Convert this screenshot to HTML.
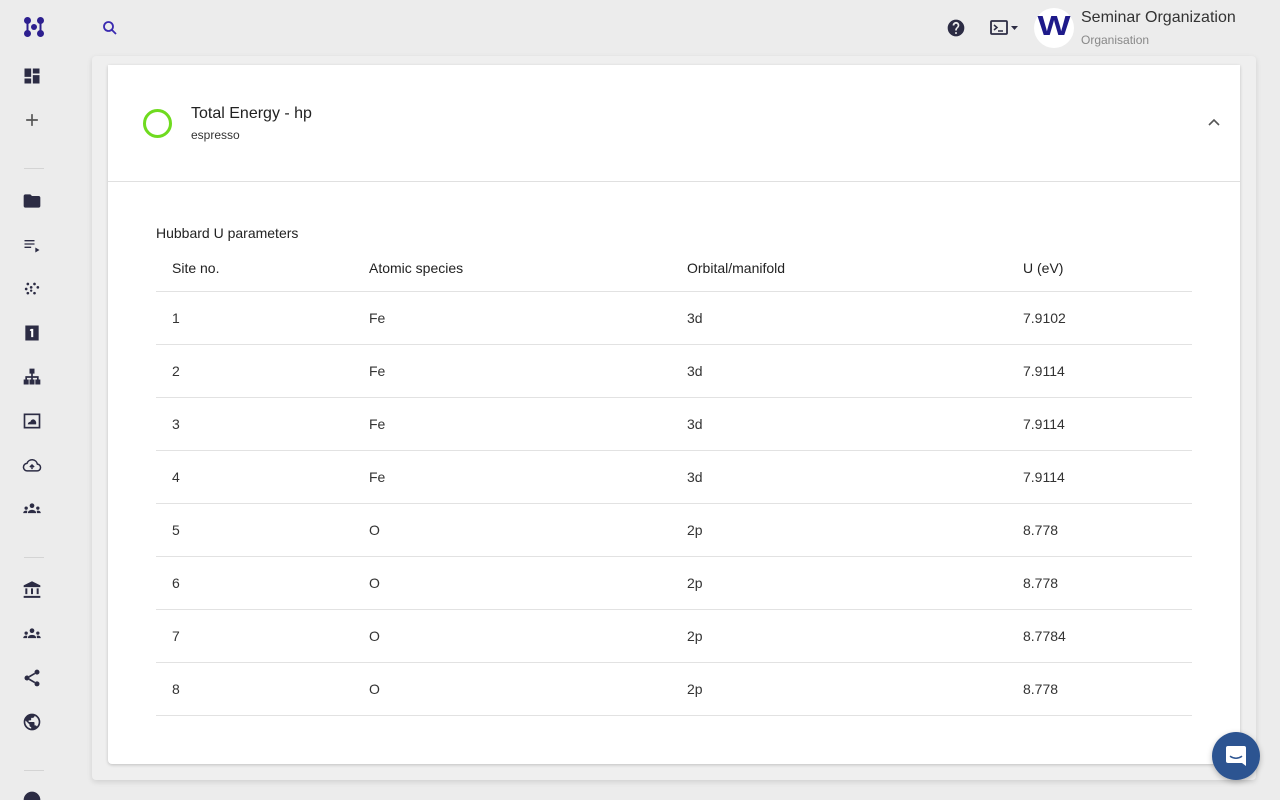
<!DOCTYPE html>
<html style="overflow:hidden;width:1280px;height:800px"><head><meta charset="utf-8"><style>
*{margin:0;padding:0;box-sizing:border-box}
body{width:1280px;height:800px;overflow:hidden;background:#ececec;font-family:"Liberation Sans",sans-serif;color:#222;position:relative}
.abs{position:absolute}
.panel{left:92px;top:56px;width:1164px;height:724px;background:#efefef;box-shadow:0 2px 6px rgba(0,0,0,.12);border-radius:4px}
.card{left:108px;top:65px;width:1132px;height:699px;background:#fff;box-shadow:0 1px 3px rgba(0,0,0,.2);border-radius:0 0 4px 4px}
.ic{position:absolute;left:22px;width:20px;height:20px}
.sep{position:absolute;left:24px;width:20px;height:1px;background:#d4d4d4}
.cell{position:absolute;font-size:14px;color:#333}
.hline{position:absolute;left:156px;width:1036px;height:1px;background:#e2e2e2}
</style></head><body>
<svg class="abs" style="left:23px;top:16px" width="22" height="22" viewBox="0 0 22 22" fill="#2d1f8f">
<circle cx="4.5" cy="4.5" r="3.5"/><circle cx="17.5" cy="4.5" r="3.5"/><circle cx="11" cy="11" r="3"/><circle cx="4.5" cy="17.5" r="3.5"/><circle cx="17.5" cy="17.5" r="3.5"/><rect x="3.5" y="5" width="2" height="10"/><rect x="16.5" y="5" width="2" height="10"/></svg>
<svg class="abs" style="left:101px;top:19px" width="18" height="18" viewBox="0 0 24 24" fill="none" stroke="#3a2ab0" stroke-width="2.4"><circle cx="10" cy="10" r="6"/><path d="M14.5 14.5L20 20"/></svg>
<svg class="ic" style="top:66px" viewBox="0 0 24 24" fill="#2c2c44"><path d="M3 13h8V3H3zm0 8h8v-6H3zm10 0h8V11h-8zm0-18v6h8V3z"/></svg>
<svg class="ic" style="top:110px" viewBox="0 0 24 24" fill="#555"><path d="M19 13h-6v6h-2v-6H5v-2h6V5h2v6h6z"/></svg>
<div class="sep" style="top:168px"></div>
<svg class="ic" style="top:191px" viewBox="0 0 24 24" fill="#2c2c44"><path d="M10 4H4c-1.1 0-2 .9-2 2v12c0 1.1.9 2 2 2h16c1.1 0 2-.9 2-2V8c0-1.1-.9-2-2-2h-8z"/></svg>
<svg class="ic" style="top:235px" viewBox="0 0 24 24" fill="#2c2c44"><path d="M3 6h12v1.6H3zm0 4h12v1.6H3zm0 4h8v1.6H3zm13 1v6l5-3z"/></svg>
<svg class="ic" style="top:279px" viewBox="0 0 24 24" fill="#2c2c44"><circle cx="7" cy="6" r="1.6"/><circle cx="15" cy="6" r="1.6"/><circle cx="11" cy="10" r="1.6"/><circle cx="19" cy="10" r="1.6"/><circle cx="5" cy="12" r="1.6"/><circle cx="7" cy="17" r="1.6"/><circle cx="15" cy="17" r="1.6"/><circle cx="11" cy="14" r="1.4"/></svg>
<svg class="ic" style="top:323px" viewBox="0 0 24 24" fill="#2c2c44"><path d="M4 3h16v18H4z"/><path d="M11 7h2.5v10H11V9.5H9.5V8z" fill="#fff"/></svg>
<svg class="ic" style="top:367px" viewBox="0 0 24 24" fill="#2c2c44"><path d="M9 2h6v6h-2v3h7v4h2v6h-6v-6h2v-2h-5v2h2v6H9v-6h2v-2H6v2h2v6H2v-6h2v-4h7V8H9z"/></svg>
<svg class="ic" style="top:411px" viewBox="0 0 24 24" fill="none" stroke="#2c2c44" stroke-width="2"><rect x="3" y="4" width="18" height="16"/><path d="M7 16c0-2 1.5-3 3-3 .5-2 2-3 3.5-3s3 1.5 3.5 3.5V16z" fill="#2c2c44" stroke="none"/></svg>
<svg class="ic" style="top:455px" viewBox="0 0 24 24" fill="none" stroke="#2c2c44" stroke-width="1.8"><path d="M6.5 19a4.5 4.5 0 0 1-.5-9A6.5 6.5 0 0 1 18.5 11 4 4 0 0 1 18 19z"/><path d="M12 17v-5m-2.5 2.5L12 12l2.5 2.5" /></svg>
<svg class="ic" style="top:499px" viewBox="0 0 24 24" fill="#2c2c44"><circle cx="12" cy="8" r="2.8"/><path d="M7 17c0-2.5 2.2-4 5-4s5 1.5 5 4z"/><circle cx="5" cy="11" r="2"/><circle cx="19" cy="11" r="2"/><path d="M1.5 17c0-2 1.5-3 3.5-3 .7 0 1 .1 1.3.3L6 17zm21 0c0-2-1.5-3-3.5-3-.7 0-1 .1-1.3.3L18 17z"/></svg>
<div class="sep" style="top:557px"></div>
<svg class="ic" style="top:580px" viewBox="0 0 24 24" fill="#2c2c44"><path d="M12 1.5L2 6.5V8.5h20V6.5zM4 10h2.4v7H4zm6.8 0h2.4v7h-2.4zm6.8 0H20v7h-2.4zM2 19h20v2.5H2z"/></svg>
<svg class="ic" style="top:624px" viewBox="0 0 24 24" fill="#2c2c44"><circle cx="12" cy="8" r="2.8"/><path d="M7 17c0-2.5 2.2-4 5-4s5 1.5 5 4z"/><circle cx="5" cy="11" r="2"/><circle cx="19" cy="11" r="2"/><path d="M1.5 17c0-2 1.5-3 3.5-3 .7 0 1 .1 1.3.3L6 17zm21 0c0-2-1.5-3-3.5-3-.7 0-1 .1-1.3.3L18 17z"/></svg>
<svg class="ic" style="top:668px" viewBox="0 0 24 24" fill="#2c2c44"><circle cx="18" cy="5" r="3"/><circle cx="6" cy="12" r="3"/><circle cx="18" cy="19" r="3"/><path d="M8.6 13.5l6.8 4M15.4 6.5l-6.8 4" stroke="#2c2c44" stroke-width="2"/></svg>
<svg class="ic" style="top:712px" viewBox="0 0 24 24" fill="#2c2c44"><path d="M12 2a10 10 0 1 0 0 20 10 10 0 0 0 0-20zm-1 17.9A8 8 0 0 1 4.2 10.2L9 15v1c0 1.1.9 2 2 2zm6.9-2.5c-.3-.8-1-1.4-1.9-1.4h-1v-3c0-.6-.4-1-1-1H8v-2h2c.6 0 1-.4 1-1V7h2c1.1 0 2-.9 2-2v-.4a8 8 0 0 1 2.9 12.8z"/></svg>
<div class="sep" style="top:770px"></div>
<svg class="ic" style="top:790px" viewBox="0 0 24 24" fill="#2c2c44"><path d="M12 2a10 10 0 1 0 0 20 10 10 0 0 0 0-20z"/></svg>
<svg class="abs" style="left:946px;top:18px" width="20" height="20" viewBox="0 0 24 24" fill="#2c2c44"><path d="M12 2a10 10 0 1 0 0 20 10 10 0 0 0 0-20zm1 17h-2v-2h2zm2.1-7.8l-.9.9C13.5 12.9 13 13.5 13 15h-2v-.5c0-1.1.5-2.1 1.2-2.8l1.2-1.3A2 2 0 1 0 10 9H8a4 4 0 1 1 7.1 2.2z"/></svg>
<svg class="abs" style="left:990px;top:19px" width="30" height="18" viewBox="0 0 30 18"><rect x="1" y="2" width="16" height="13" rx="1" fill="none" stroke="#2c2c44" stroke-width="1.8"/><path d="M4 6l3 2.5L4 11" fill="none" stroke="#2c2c44" stroke-width="1.5"/><path d="M8 12h5" stroke="#2c2c44" stroke-width="1.5"/><path d="M21 7h7l-3.5 4z" fill="#2c2c44"/></svg>
<div class="abs" style="left:1034px;top:8px;width:40px;height:40px;border-radius:50%;background:#fff"></div>
<div class="abs" style="left:1034px;top:10px;width:40px;text-align:center;font-weight:bold;font-size:28px;color:#1e1a8a;transform:scaleX(1.25)">W</div>
<div class="abs" style="left:1081px;top:9px;font-size:16px;color:#333">Seminar Organization</div>
<div class="abs" style="left:1081px;top:33px;font-size:12px;color:#888">Organisation</div>
<div class="abs panel"></div>
<div class="abs card"></div>
<div class="abs" style="left:143px;top:109px;width:29px;height:29px;border-radius:50%;border:3px solid #6fdb1f"></div>
<div class="abs" style="left:191px;top:105px;font-size:16px;color:#222">Total Energy - hp</div>
<div class="abs" style="left:191px;top:128px;font-size:12px;color:#333">espresso</div>
<svg class="abs" style="left:1207px;top:117px" width="14" height="10" viewBox="0 0 14 10"><path d="M2 8l5-5 5 5" fill="none" stroke="#555" stroke-width="1.6"/></svg>
<div class="abs" style="left:108px;top:181px;width:1132px;height:1px;background:#e0e0e0"></div>
<div class="abs" style="left:156px;top:225px;font-size:14px;font-weight:500;color:#222">Hubbard U parameters</div>
<div class="cell" style="left:172px;top:260px;color:#222">Site no.</div>
<div class="cell" style="left:369px;top:260px;color:#222">Atomic species</div>
<div class="cell" style="left:687px;top:260px;color:#222">Orbital/manifold</div>
<div class="cell" style="left:1023px;top:260px;color:#222">U (eV)</div>
<div class="hline" style="top:291px"></div>
<div class="cell" style="left:172px;top:310px">1</div><div class="cell" style="left:369px;top:310px">Fe</div><div class="cell" style="left:687px;top:310px">3d</div><div class="cell" style="left:1023px;top:310px">7.9102</div>
<div class="hline" style="top:344px"></div>
<div class="cell" style="left:172px;top:363px">2</div><div class="cell" style="left:369px;top:363px">Fe</div><div class="cell" style="left:687px;top:363px">3d</div><div class="cell" style="left:1023px;top:363px">7.9114</div>
<div class="hline" style="top:397px"></div>
<div class="cell" style="left:172px;top:416px">3</div><div class="cell" style="left:369px;top:416px">Fe</div><div class="cell" style="left:687px;top:416px">3d</div><div class="cell" style="left:1023px;top:416px">7.9114</div>
<div class="hline" style="top:450px"></div>
<div class="cell" style="left:172px;top:469px">4</div><div class="cell" style="left:369px;top:469px">Fe</div><div class="cell" style="left:687px;top:469px">3d</div><div class="cell" style="left:1023px;top:469px">7.9114</div>
<div class="hline" style="top:503px"></div>
<div class="cell" style="left:172px;top:522px">5</div><div class="cell" style="left:369px;top:522px">O</div><div class="cell" style="left:687px;top:522px">2p</div><div class="cell" style="left:1023px;top:522px">8.778</div>
<div class="hline" style="top:556px"></div>
<div class="cell" style="left:172px;top:575px">6</div><div class="cell" style="left:369px;top:575px">O</div><div class="cell" style="left:687px;top:575px">2p</div><div class="cell" style="left:1023px;top:575px">8.778</div>
<div class="hline" style="top:609px"></div>
<div class="cell" style="left:172px;top:628px">7</div><div class="cell" style="left:369px;top:628px">O</div><div class="cell" style="left:687px;top:628px">2p</div><div class="cell" style="left:1023px;top:628px">8.7784</div>
<div class="hline" style="top:662px"></div>
<div class="cell" style="left:172px;top:681px">8</div><div class="cell" style="left:369px;top:681px">O</div><div class="cell" style="left:687px;top:681px">2p</div><div class="cell" style="left:1023px;top:681px">8.778</div>
<div class="hline" style="top:715px"></div>
<div class="abs" style="left:1212px;top:732px;width:48px;height:48px;border-radius:50%;background:#2c5491;box-shadow:0 2px 6px rgba(0,0,0,.25)"></div>
<svg class="abs" style="left:1224px;top:744px" width="24" height="24" viewBox="0 0 24 24"><path d="M4 2h16a2 2 0 0 1 2 2v18l-4-3H4a2 2 0 0 1-2-2V4a2 2 0 0 1 2-2z" fill="#fff"/><path d="M6.5 12.5q5.5 3.5 11 0" fill="none" stroke="#2c5491" stroke-width="1.6" stroke-linecap="round"/></svg>
</body></html>
